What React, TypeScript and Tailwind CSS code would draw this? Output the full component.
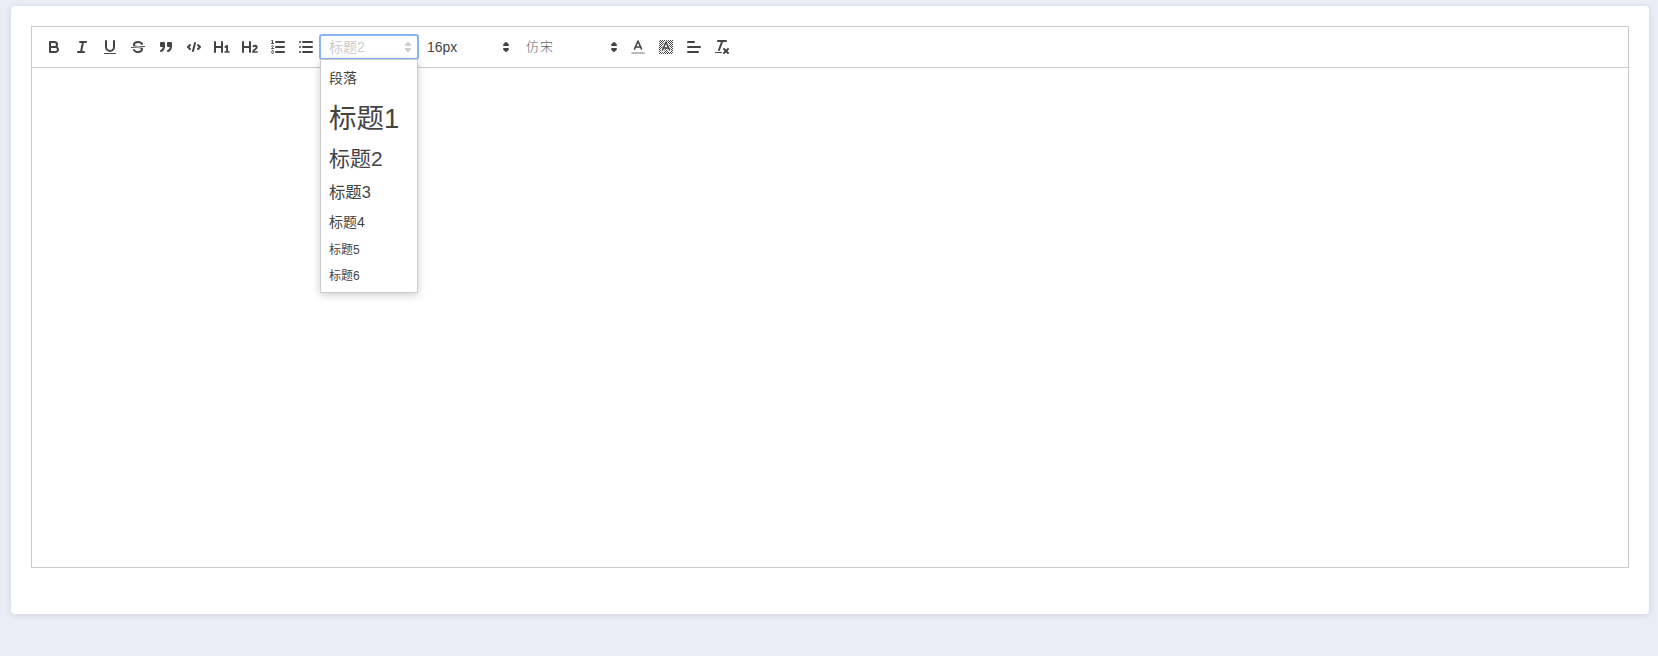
import type { ReactNode } from "react";

const FONT = '"Liberation Sans", "Noto Sans CJK SC", sans-serif';

// Snow theme icons, all 18x18
function Icon({ children }: { children: ReactNode }) {
    return (
        <svg viewBox="0 0 18 18" className="h-[18px] w-[18px] fill-none stroke-[#444] stroke-2 [stroke-linecap:round] [stroke-linejoin:round]">
            {children}
        </svg>
    );
}

function ToolButton({ children }: { children: ReactNode }) {
    return <button className="flex h-6 w-7 shrink-0 items-center justify-center">{children}</button>;
}

const Arrows = ({ color }: { color: string }) => (
    <svg viewBox="0 0 18 18" className="absolute right-px top-[3px] h-[18px] w-[18px]" fill={color} stroke={color} strokeWidth="2" strokeLinejoin="round">
        <polygon points="7 11 9 13 11 11 7 11" />
        <polygon points="7 7 9 5 11 7 7 7" />
    </svg>
);

// hatch cells behind the highlight "A"
const hatchCells: { x: number; y: number }[] = [];
for (let y = 2; y < 16; y++) {
    for (let x = 2; x < 16; x++) {
        if ((x + y) % 2 === 1) hatchCells.push({ x, y });
    }
}

const headerOptions = [
    { label: "段落", cls: "pt-[5px] pb-[5px] text-[14px] leading-[19px]" },
    { label: "标题1", cls: "pt-[6px] pb-[4px] text-[27.5px] leading-[39px]" },
    { label: "标题2", cls: "pt-[4px] pb-[6px] text-[21px] leading-[25px]" },
    { label: "标题3", cls: "pt-[5px] pb-[5px] text-[16.38px] leading-[21px]" },
    { label: "标题4", cls: "pt-[5px] pb-[5px] text-[14px] leading-[19px]" },
    { label: "标题5", cls: "pt-[5px] pb-[5px] text-[12px] leading-[16px]" },
    { label: "标题6", cls: "pt-[6px] pb-[4px] text-[12px] leading-[15px]" },
];

export default function App() {
    return (
        <div className="min-h-screen bg-[#eaedf6] pl-[11px] pr-[9px] pt-[6px]" style={{ fontFamily: FONT }}>
            <div className="h-[608px] rounded-[4px] bg-white p-5 shadow-[0_1px_6px_rgba(0,21,41,0.12)]">
                {/* Toolbar */}
                <div className="flex h-[42px] items-center border border-[#ccc] px-2">
                    <ToolButton>
                        <Icon>
                            <path d="M5,4H9.5A2.5,2.5,0,0,1,12,6.5v0A2.5,2.5,0,0,1,9.5,9H5A0,0,0,0,1,5,9V4A0,0,0,0,1,5,4Z" />
                            <path d="M5,9h5.5A2.5,2.5,0,0,1,13,11.5v0A2.5,2.5,0,0,1,10.5,14H5a0,0,0,0,1,0,0V9A0,0,0,0,1,5,9Z" />
                        </Icon>
                    </ToolButton>
                    <ToolButton>
                        <Icon>
                            <line x1="7" x2="13" y1="4" y2="4" />
                            <line x1="5" x2="11" y1="14" y2="14" />
                            <line x1="8" x2="10" y1="14" y2="4" />
                        </Icon>
                    </ToolButton>
                    <ToolButton>
                        <Icon>
                            <path d="M5,3V9a4.012,4.012,0,0,0,4,4H9a4.012,4.012,0,0,0,4-4V3" />
                            <rect x="3" y="15" width="12" height="1" rx="0.5" ry="0.5" fill="#444" stroke="none" />
                        </Icon>
                    </ToolButton>
                    <ToolButton>
                        <Icon>
                            <line x1="15.5" x2="2.5" y1="8.5" y2="9.5" strokeWidth="1" />
                            <path fill="#444" stroke="none" d="M9.007,8C6.542,7.791,6,7.519,6,6.5,6,5.792,7.283,5,9,5c1.571,0,2.765.679,2.969,1.309a1,1,0,0,0,1.9-.617C13.356,4.106,11.354,3,9,3,6.2,3,4,4.538,4,6.5a3.2,3.2,0,0,0,.5,1.843Z" />
                            <path fill="#444" stroke="none" d="M8.984,10C11.457,10.208,12,10.479,12,11.5c0,.708-1.283,1.5-3,1.5-1.571,0-2.765-.679-2.969-1.309a1,1,0,1,0-1.9.617C4.644,13.894,6.646,15,9,15c2.8,0,5-1.538,5-3.5a3.2,3.2,0,0,0-.5-1.843Z" />
                        </Icon>
                    </ToolButton>
                    <ToolButton>
                        <Icon>
                            <rect x="4" y="5" width="3" height="3" fill="#444" />
                            <rect x="11" y="5" width="3" height="3" fill="#444" />
                            <path d="M7,8c0,4.031-3,5-3,5" fill="#444" />
                            <path d="M14,8c0,4.031-3,5-3,5" fill="#444" />
                        </Icon>
                    </ToolButton>
                    <ToolButton>
                        <Icon>
                            <polyline points="5 7 3 9 5 11" />
                            <polyline points="13 7 15 9 13 11" />
                            <line x1="10" x2="8" y1="5" y2="13" />
                        </Icon>
                    </ToolButton>
                    <ToolButton>
                        <Icon>
                            <path fill="#444" stroke="none" d="M10,4V14a1,1,0,0,1-2,0V10H3v4a1,1,0,0,1-2,0V4A1,1,0,0,1,3,4V8H8V4a1,1,0,0,1,2,0Zm6.06787,9.209H14.98975V7.59863a.54085.54085,0,0,0-.605-.60547h-.62744a1.01119,1.01119,0,0,0-.748.29688L11.645,8.56641a.5435.5435,0,0,0-.022.8584l.28613.30762a.53861.53861,0,0,0,.84717.0332l.09912-.08789a1.2137,1.2137,0,0,0,.2417-.35254h.02246s-.01123.30859-.01123.60547V13.209H12.041a.54085.54085,0,0,0-.605.60547v.43945a.54085.54085,0,0,0,.605.60547h4.02686a.54085.54085,0,0,0,.605-.60547v-.43945A.54085.54085,0,0,0,16.06787,13.209Z" />
                        </Icon>
                    </ToolButton>
                    <ToolButton>
                        <Icon>
                            <path fill="#444" stroke="none" d="M16.73975,13.81445v.43945a.54085.54085,0,0,1-.605.60547H11.855a.58392.58392,0,0,1-.64893-.60547V14.0127c0-2.90527,3.39941-3.42187,3.39941-4.55469a.77675.77675,0,0,0-.84717-.78125,1.17684,1.17684,0,0,0-.83594.38477c-.2749.26367-.561.374-.85791.13184l-.4292-.34082c-.30811-.24219-.38525-.51758-.1543-.81445a2.97155,2.97155,0,0,1,2.45361-1.17676,2.45393,2.45393,0,0,1,2.68408,2.40918c0,2.45312-3.1792,2.92676-3.27832,3.93848h2.79443A.54085.54085,0,0,1,16.73975,13.81445ZM9,3A.99974.99974,0,0,0,8,4V8H3V4A1,1,0,0,0,1,4V14a1,1,0,0,0,2,0V10H8v4a1,1,0,0,0,2,0V4A.99974.99974,0,0,0,9,3Z" />
                        </Icon>
                    </ToolButton>
                    <ToolButton>
                        <Icon>
                            <line x1="7" x2="15" y1="4" y2="4" />
                            <line x1="7" x2="15" y1="9" y2="9" />
                            <line x1="7" x2="15" y1="14" y2="14" />
                            <line x1="2.5" x2="4.5" y1="5.5" y2="5.5" strokeWidth="1" />
                            <path fill="#444" stroke="none" d="M3.5,6A0.5,0.5,0,0,1,3,5.5V3.085l-0.276.138A0.5,0.5,0,0,1,2.053,3c-0.124-.247-0.023-0.324.224-0.447l1-.5A0.5,0.5,0,0,1,4,2.5v3A0.5,0.5,0,0,1,3.5,6Z" />
                            <path strokeWidth="1" d="M4.5,10.5h-2c0-.234,1.85-1.076,1.85-2.234A0.959,0.959,0,0,0,2.5,8.156" />
                            <path strokeWidth="1" d="M2.5,14.846a0.959,0.959,0,0,0,1.85-.109A0.7,0.7,0,0,0,3.75,14a0.688,0.688,0,0,0,.6-0.736,0.959,0.959,0,0,0-1.85-.109" />
                        </Icon>
                    </ToolButton>
                    <ToolButton>
                        <Icon>
                            <line x1="6" x2="15" y1="4" y2="4" />
                            <line x1="6" x2="15" y1="9" y2="9" />
                            <line x1="6" x2="15" y1="14" y2="14" />
                            <line x1="3" x2="3" y1="4" y2="4" />
                            <line x1="3" x2="3" y1="9" y2="9" />
                            <line x1="3" x2="3" y1="14" y2="14" />
                        </Icon>
                    </ToolButton>

                    {/* Header picker, open */}
                    <div className="relative h-6 w-[98px] shrink-0 text-[14px] font-medium">
                        <div className="relative h-full rounded-[2px] pl-[9px] text-[14px] font-normal leading-[24px] text-[#ccc] outline-2 -outline-offset-1 outline-[#8ab4f8]">
                            标题2
                            <Arrows color="#ccc" />
                        </div>
                        <div className="absolute left-0 top-full z-10 w-full border border-[#ccc] bg-white px-2 py-1 font-normal text-[#444] shadow-[0_2px_8px_rgba(0,0,0,0.2)]">
                            {headerOptions.map((opt) => (
                                <div key={opt.label} className={`whitespace-nowrap ${opt.cls}`}>
                                    {opt.label}
                                </div>
                            ))}
                        </div>
                    </div>

                    {/* Size picker */}
                    <div className="relative h-6 w-[98px] shrink-0 pl-[9px] text-[14px] leading-[24px] text-[#444]">
                        16px
                        <Arrows color="#444" />
                    </div>

                    {/* Font picker */}
                    <div className="relative h-6 w-[108px] shrink-0 pl-[10px] text-[13px] font-light leading-[24px] tracking-[1px] text-[#666]">
                        仿宋
                        <Arrows color="#444" />
                    </div>

                    <ToolButton>
                        <Icon>
                            <line x1="3" x2="15" y1="15" y2="15" stroke="#bbb" />
                            <polyline points="5.5 11 9 3 12.5 11" strokeWidth="1.6" />
                            <line x1="11.63" x2="6.38" y1="9" y2="9" strokeWidth="1.4" />
                        </Icon>
                    </ToolButton>
                    <ToolButton>
                        <Icon>
                            <g fill="#444" stroke="none">
                                {hatchCells.map((c) => (
                                    <rect key={`${c.x}-${c.y}`} x={c.x} y={c.y} width="1" height="1" />
                                ))}
                            </g>
                            <polyline points="5.5 12.5 9 4.5 12.5 12.5" stroke="#fff" strokeWidth="3.4" />
                            <polyline points="5.5 12 9 4 12.5 12" strokeWidth="1.6" />
                            <line x1="11.63" x2="6.38" y1="10" y2="10" strokeWidth="1.4" />
                        </Icon>
                    </ToolButton>
                    <ToolButton>
                        <Icon>
                            <line x1="3" x2="15" y1="9" y2="9" />
                            <line x1="3" x2="13" y1="14" y2="14" />
                            <line x1="3" x2="9" y1="4" y2="4" />
                        </Icon>
                    </ToolButton>
                    <ToolButton>
                        <Icon>
                            <line x1="5" x2="13" y1="3" y2="3" />
                            <line x1="6" x2="9.35" y1="12" y2="3" />
                            <line x1="11" x2="15" y1="11" y2="15" />
                            <line x1="15" x2="11" y1="11" y2="15" />
                            <rect x="2" y="14" width="7" height="1" rx="0.5" ry="0.5" fill="#444" stroke="none" />
                        </Icon>
                    </ToolButton>
                </div>

                {/* Editor area */}
                <div className="h-[500px] border border-t-0 border-[#ccc]" />
            </div>
        </div>
    );
}
